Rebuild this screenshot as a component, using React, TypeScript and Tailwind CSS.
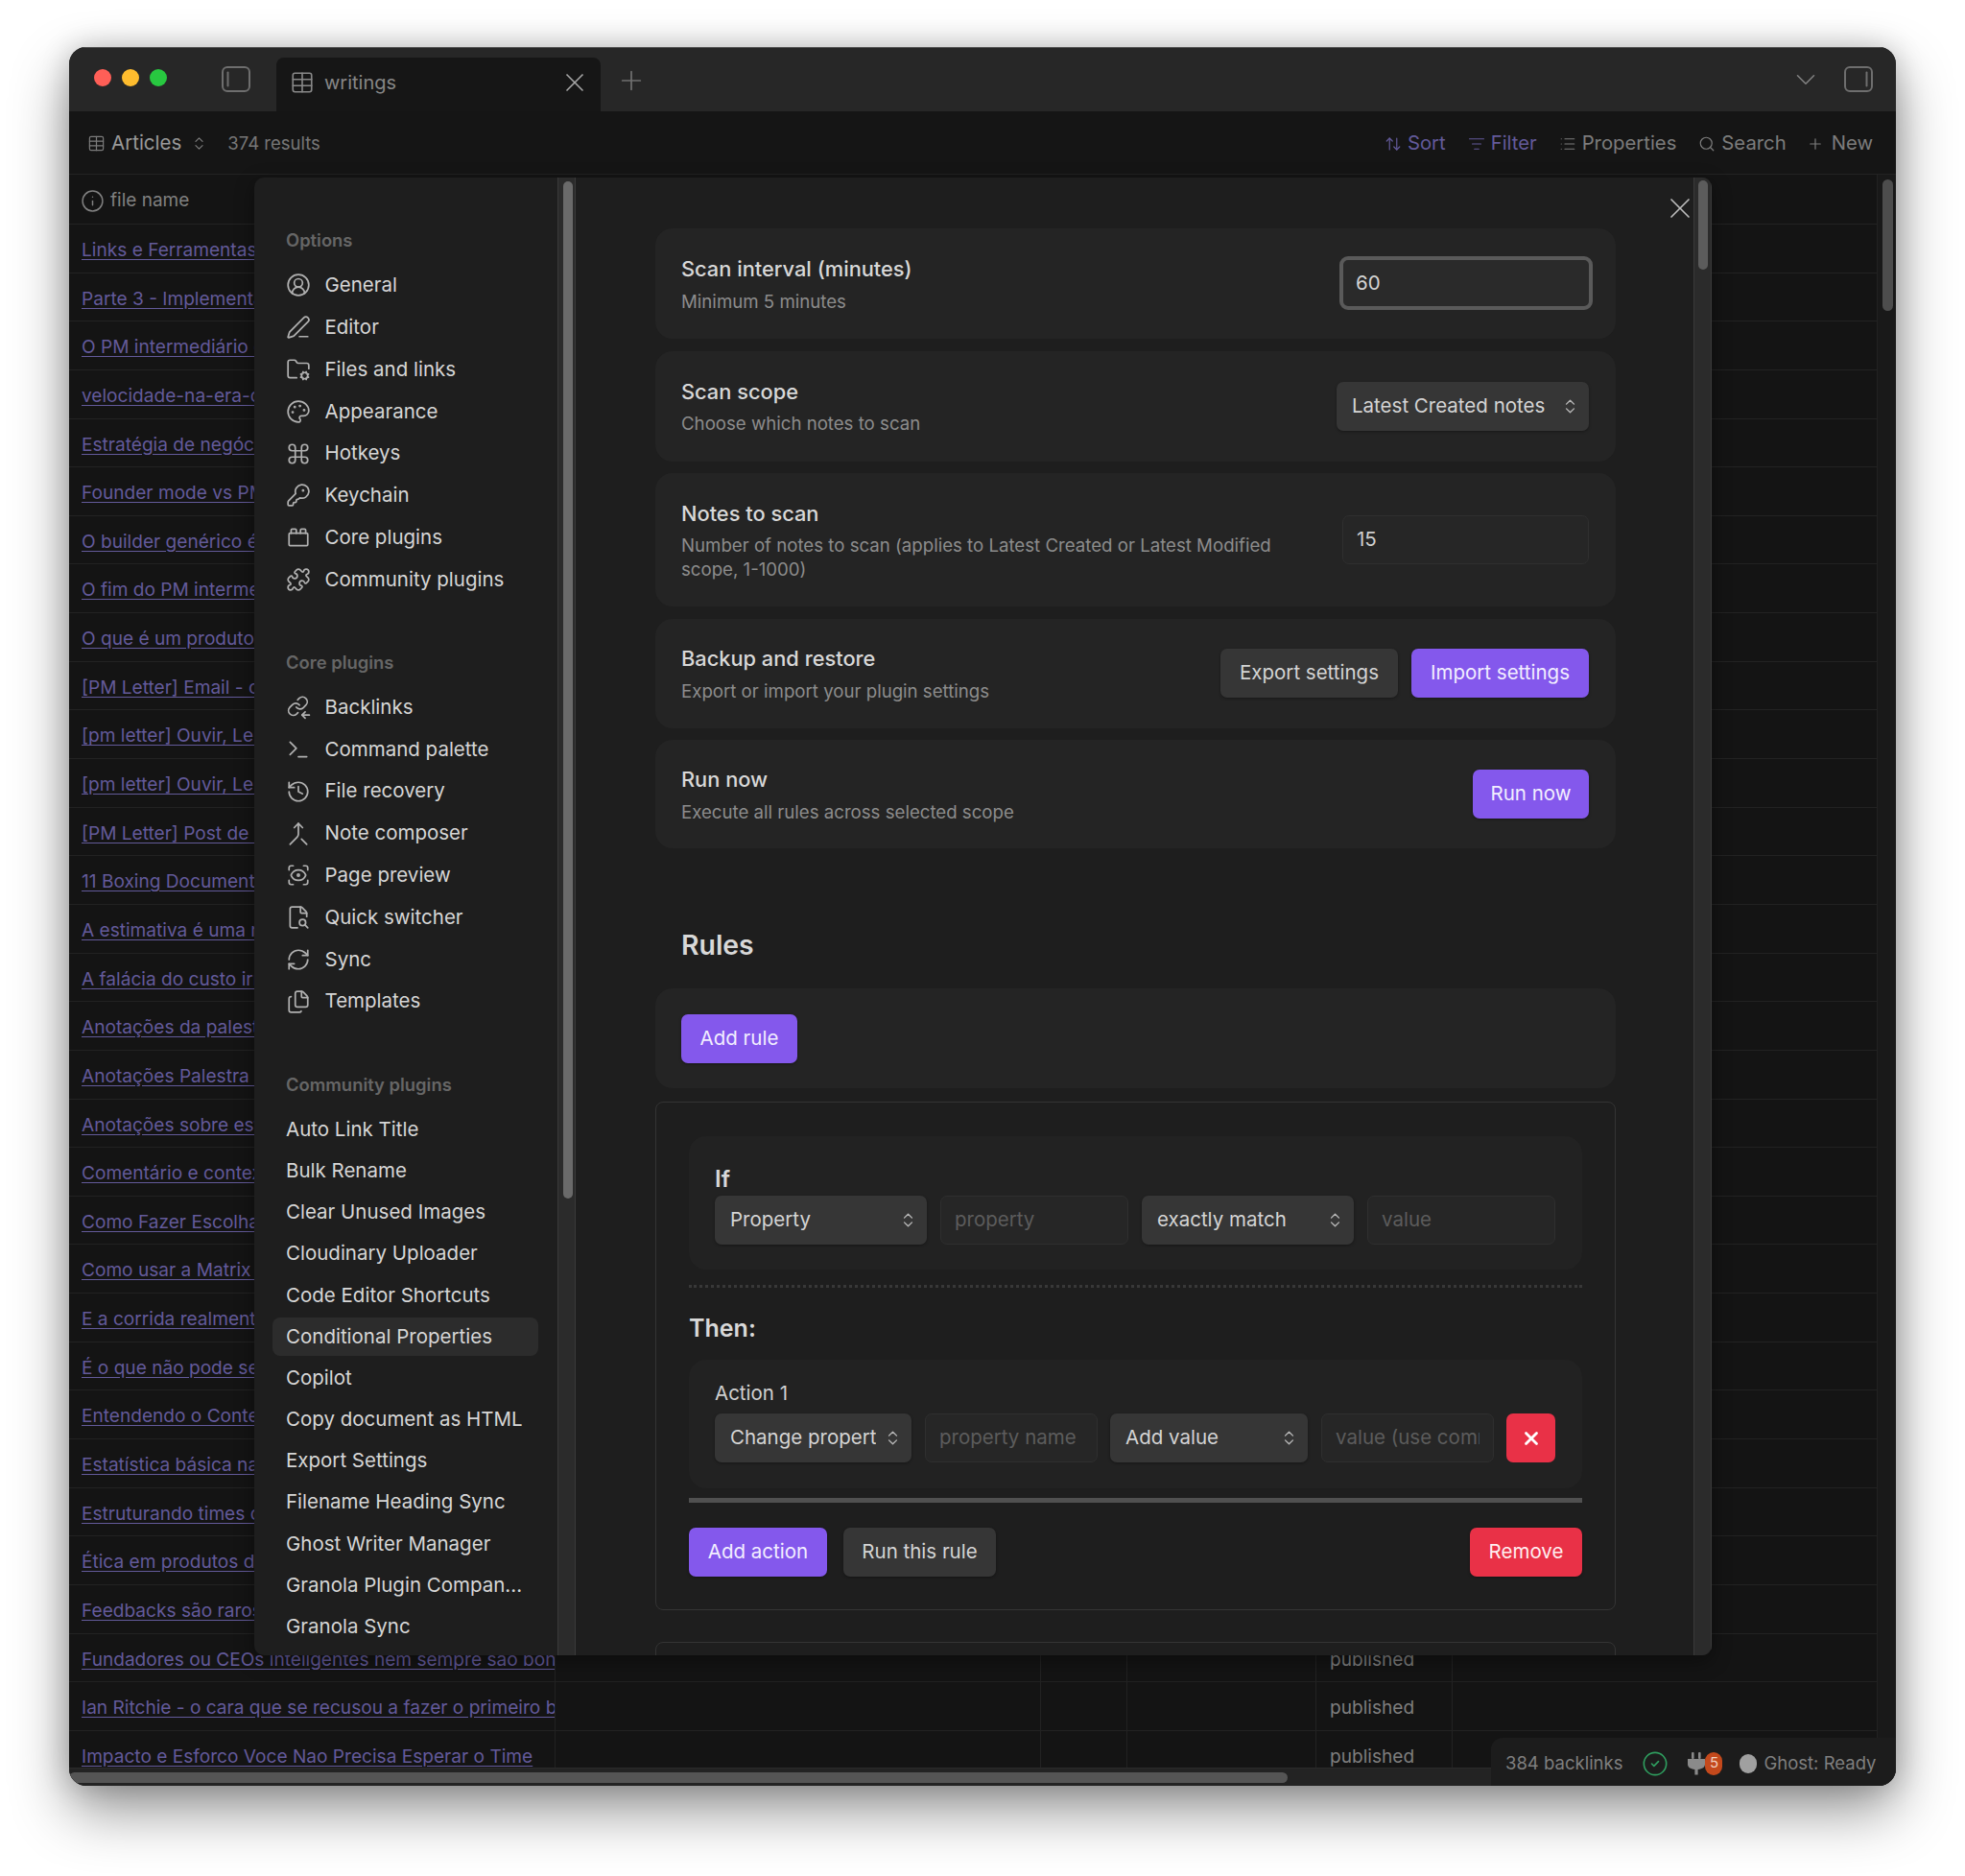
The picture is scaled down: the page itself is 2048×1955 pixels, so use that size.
import {
  ArrowUpDown,
  ChevronDown,
  ChevronsUpDown,
  CircleCheck,
  CircleUserRound,
  Command,
  Files,
  FileSearch2,
  FolderCog,
  History,
  Info,
  KeyRound,
  List,
  ListFilter,
  Merge,
  Palette,
  PenLine,
  Plus,
  Puzzle,
  RefreshCw,
  ScanEye,
  Search,
  Table,
  Terminal,
  ToyBrick,
  X,
} from "lucide-react"
import type { ReactNode } from "react"

const files = [
  "Links e Ferramentas para produto",
  "Parte 3 - Implementando o processo",
  "O PM intermediário e o mercado",
  "velocidade-na-era-da-ia-e-produto",
  "Estratégia de negócio e produto",
  "Founder mode vs PM mode na prática",
  "O builder genérico é o novo PM",
  "O fim do PM intermediário e depois",
  "O que é um produto de verdade",
  "[PM Letter] Email - como começar",
  "[pm letter] Ouvir, Ler e Escrever",
  "[pm letter] Ouvir, Ler e Escrever 2",
  "[PM Letter] Post de lançamento",
  "11 Boxing Documents para produto",
  "A estimativa é uma mentira útil",
  "A falácia do custo irrecuperável",
  "Anotações da palestra de produto",
  "Anotações Palestra de estratégia",
  "Anotações sobre estratégia e times",
  "Comentário e contexto em produto",
  "Como Fazer Escolhas difíceis",
  "Como usar a Matrix de decisão",
  "E a corrida realmente importa aqui",
  "É o que não pode ser medido",
  "Entendendo o Contexto do produto",
  "Estatística básica na prática diária",
  "Estruturando times de produto",
  "Ética em produtos digitais hoje",
  "Feedbacks são raros e valiosos",
  "Fundadores ou CEOs inteligentes nem sempre sao bons gestores de produto",
  "Ian Ritchie - o cara que se recusou a fazer o primeiro bilhão de dólares",
  "Impacto e Esforco Voce Nao Precisa Esperar o Time",
]

function BacklinksIcon() {
  return (
    <svg width="30" height="30" viewBox="0 0 24 24" fill="none" stroke="currentColor" strokeWidth="1.6" strokeLinecap="round" strokeLinejoin="round">
      <path d="M10 12a4.5 4.5 0 0 0 6.7.5l2.6-2.6a4.6 4.6 0 0 0-6.5-6.5l-1.5 1.5" />
      <path d="M13 10a4.5 4.5 0 0 0-6.7-.5l-2.6 2.6a4.6 4.6 0 0 0 6.5 6.5l1.4-1.4" />
      <path d="M22.5 19.5h-7" />
      <path d="m18.5 16.5-3 3 3 3" />
    </svg>
  )
}

function PaneIcon({ side }: { side: "left" | "right" }) {
  return (
    <svg width="30" height="27" viewBox="0 0 30 27" fill="none" stroke="#6e6e6e" strokeWidth="2" strokeLinecap="round">
      <rect x="1" y="1" width="28" height="25" rx="5" />
      {side === "left" ? <path d="M6.5 6.5v14" /> : <path d="M23.5 6.5v14" />}
    </svg>
  )
}

const optionItems = [
  { label: "General", icon: <CircleUserRound size={30} strokeWidth={1.6} /> },
  { label: "Editor", icon: <PenLine size={30} strokeWidth={1.6} /> },
  { label: "Files and links", icon: <FolderCog size={30} strokeWidth={1.6} /> },
  { label: "Appearance", icon: <Palette size={30} strokeWidth={1.6} /> },
  { label: "Hotkeys", icon: <Command size={30} strokeWidth={1.6} /> },
  { label: "Keychain", icon: <KeyRound size={30} strokeWidth={1.6} /> },
  { label: "Core plugins", icon: <ToyBrick size={30} strokeWidth={1.6} /> },
  { label: "Community plugins", icon: <Puzzle size={30} strokeWidth={1.6} /> },
]

const coreItems = [
  { label: "Backlinks", icon: <BacklinksIcon /> },
  { label: "Command palette", icon: <Terminal size={30} strokeWidth={1.6} /> },
  { label: "File recovery", icon: <History size={30} strokeWidth={1.6} /> },
  { label: "Note composer", icon: <Merge size={30} strokeWidth={1.6} /> },
  { label: "Page preview", icon: <ScanEye size={30} strokeWidth={1.6} /> },
  { label: "Quick switcher", icon: <FileSearch2 size={30} strokeWidth={1.6} /> },
  { label: "Sync", icon: <RefreshCw size={30} strokeWidth={1.6} /> },
  { label: "Templates", icon: <Files size={30} strokeWidth={1.6} /> },
]

const communityItems = [
  "Auto Link Title",
  "Bulk Rename",
  "Clear Unused Images",
  "Cloudinary Uploader",
  "Code Editor Shortcuts",
  "Conditional Properties",
  "Copilot",
  "Copy document as HTML",
  "Export Settings",
  "Filename Heading Sync",
  "Ghost Writer Manager",
  "Granola Plugin Compan...",
  "Granola Sync",
]

function NavItem({ label, icon }: { label: string; icon: ReactNode }) {
  return (
    <div className="flex h-[43.8px] items-center gap-[14.5px] text-[20.5px] text-[#d6d6d6]">
      <span className="flex w-[26px] shrink-0 justify-center text-[#b0b0b0]">{icon}</span>
      <span>{label}</span>
    </div>
  )
}

function Select({ label, className }: { label: string; className: string }) {
  return (
    <div className={`flex h-[51px] shrink-0 items-center rounded-[7px] bg-[#363636] pl-[16px] pr-[10px] text-[20.5px] text-[#d4d4d4] shadow-[0_1px_3px_rgba(0,0,0,0.35)] ${className}`}>
      <span className="min-w-0 flex-1 overflow-hidden whitespace-nowrap">{label}</span>
      <ChevronsUpDown size={19} strokeWidth={1.75} className="ml-[8px] shrink-0 text-[#b8b8b8]" />
    </div>
  )
}

function Field({ text, className, muted = true }: { text: string; className: string; muted?: boolean }) {
  return (
    <div className={`flex h-[51px] shrink-0 items-center overflow-hidden whitespace-nowrap rounded-[7px] border border-[#2f2f2f] bg-[#262626] px-[14px] text-[20.5px] ${muted ? "text-[#5c5c5c]" : "text-[#cfcfcf]"} ${className}`}>
      <span className="block w-full overflow-hidden">{text}</span>
    </div>
  )
}

function Btn({ label, tone, className = "" }: { label: string; tone: "purple" | "gray" | "red"; className?: string }) {
  const tones = {
    purple: "bg-[#8458ec] text-[#f2eeff]",
    gray: "bg-[#363636] text-[#d4d4d4]",
    red: "bg-[#e93147] text-[#ffeef0]",
  }
  return (
    <div className={`flex h-[51px] shrink-0 items-center justify-center rounded-[7px] text-[20.5px] shadow-[0_1px_3px_rgba(0,0,0,0.35)] ${tones[tone]} ${className}`}>
      {label}
    </div>
  )
}

function SettingCard({ title, desc, height, children }: { title: string; desc: string; height: string; children: ReactNode }) {
  return (
    <div className={`flex items-center justify-between rounded-[18px] bg-[#242424] pl-[27px] pr-[28px] ${height}`}>
      <div className="w-[640px]">
        <div className="text-[21.8px] font-medium leading-[30px] text-[#d8d8d8]">{title}</div>
        <div className="mt-[6.5px] text-[18.65px] leading-[24.5px] text-[#8c8c8c]">{desc}</div>
      </div>
      {children}
    </div>
  )
}

export default function App() {
  return (
    <div className="h-[1955px] w-[2048px] overflow-hidden bg-white pl-[72px] pt-[49px] font-['Inter',sans-serif]">
      <div className="relative flex h-[1812px] w-[1904px] flex-col overflow-hidden rounded-[18px] bg-[#141414] shadow-[0_26px_60px_rgba(0,0,0,0.42),0_0_30px_rgba(0,0,0,0.2)]">
        {/* Title bar */}
        <div className="flex h-[67px] shrink-0 items-end border-t border-[#555] bg-[#272727]">
          <div className="mb-[26px] ml-[26px] flex gap-[11px]">
            <span className="h-[18px] w-[18px] rounded-full bg-[#ff5f57]" />
            <span className="h-[18px] w-[18px] rounded-full bg-[#febc2e]" />
            <span className="h-[18px] w-[18px] rounded-full bg-[#28c840]" />
          </div>
          <div className="mb-[20px] ml-[57px]">
            <PaneIcon side="left" />
          </div>
          <div className="ml-[27px] flex h-[56px] w-[338px] items-center rounded-t-[8px] bg-[#161616] pb-[4px] pl-[14px] pr-[11px] text-[20px] text-[#868686]">
            <Table size={26} strokeWidth={1.5} className="text-[#888]" />
            <span className="ml-[10px] flex-1">writings</span>
            <X size={32} strokeWidth={1.25} className="text-[#a8a8a8]" />
          </div>
          <Plus size={32} strokeWidth={1.3} className="mb-[16px] ml-[16px] text-[#707070]" />
          <div className="flex-1" />
          <ChevronDown size={34} strokeWidth={1.1} className="mb-[16px] text-[#808080]" />
          <div className="mb-[20px] ml-[23px] mr-[24px]">
            <PaneIcon side="right" />
          </div>
        </div>

        {/* View toolbar */}
        <div className="flex h-[66px] shrink-0 items-center border-b border-[#232323] bg-[#151515] pl-[19px] pr-[24px] pt-[2px] text-[20.3px] text-[#7c7c7c]">
          <Table size={19} strokeWidth={1.5} />
          <span className="ml-[6px] text-[20.5px] text-[#9a9a9a]">Articles</span>
          <ChevronsUpDown size={17} strokeWidth={1.6} className="ml-[10px]" />
          <span className="ml-[21px] text-[18.5px] text-[#777]">374 results</span>
          <div className="flex-1" />
          <div className="flex items-center gap-[6px] text-[#635a9a]">
            <ArrowUpDown size={18} strokeWidth={1.6} />
            <span>Sort</span>
          </div>
          <div className="ml-[23px] flex items-center gap-[6px] text-[#635a9a]">
            <ListFilter size={18} strokeWidth={1.6} />
            <span>Filter</span>
          </div>
          <div className="ml-[23px] flex items-center gap-[6px]">
            <List size={18} strokeWidth={1.6} />
            <span>Properties</span>
          </div>
          <div className="ml-[23px] flex items-center gap-[6px]">
            <Search size={18} strokeWidth={1.6} />
            <span>Search</span>
          </div>
          <div className="ml-[21px] flex items-center gap-[8px]">
            <Plus size={18} strokeWidth={1.6} />
            <span>New</span>
          </div>
        </div>

        {/* Table */}
        <div className="flex min-h-0 flex-1">
          <div className="min-w-0 flex-1 overflow-hidden border-r border-[#222]">
            <div className="flex h-[52px] items-center gap-[6px] border-b border-[#222] pl-[12px] pt-[3px] text-[19px] text-[#808080]">
              <Info size={25} strokeWidth={1.4} />
              <span>file name</span>
            </div>
            {files.map((name, i) => (
              <div key={name} className="flex h-[50.65px] items-stretch border-b border-[#222] text-[19.1px]">
                <div className="flex w-[506px] shrink-0 items-center overflow-hidden whitespace-nowrap pl-[13px] pt-[3px] text-[#635a9a] underline underline-offset-[3px]">
                  <span className={i < 29 ? "block w-[180px] overflow-hidden" : "block"}>{name}</span>
                </div>
                <div className="w-[506px] shrink-0 border-l border-[#222]" />
                <div className="w-[90px] shrink-0 border-l border-[#222]" />
                <div className="w-[197px] shrink-0 border-l border-[#222]" />
                <div className="flex w-[143px] shrink-0 items-center border-x border-[#222] pl-[14px] pt-[3px] text-[#7e7e7e]">
                  {i >= 29 ? "published" : ""}
                </div>
              </div>
            ))}
          </div>
          <div className="w-[19px] shrink-0 bg-[#191919] pl-[5px] pt-[5px]">
            <div className="h-[137px] w-[11px] rounded-full bg-[#4d4d4d]" />
          </div>
        </div>
        <div className="h-[19px] shrink-0 border-t border-[#2a2a2a] bg-[#232323] pt-[4px]">
          <div className="h-[11px] w-[1270px] rounded-full bg-[#555]" />
        </div>

        {/* Status bar */}
        <div className="absolute bottom-0 right-0 flex h-[50px] w-[422px] items-center rounded-tl-[12px] bg-[#1c1c1c] pl-[15px] pt-[3px] text-[18.5px] text-[#7f7f7f]">
          <span>384 backlinks</span>
          <CircleCheck size={28} strokeWidth={1.4} className="ml-[20px] text-[#2f9e5f]" />
          <svg width="20" height="24" viewBox="0 0 20 24" fill="#8a8a8a" className="ml-[19px]">
            <rect x="5" y="0" width="2.6" height="7" rx="1" />
            <rect x="12" y="0" width="2.6" height="7" rx="1" />
            <path d="M1 7h18v5.5c0 3-2.6 5-7.4 5.5v5.5h-3.2V18C3.6 17.5 1 15.5 1 12.5Z" />
          </svg>
          <span className="ml-[-1px] flex h-[24px] w-[18px] items-center justify-center rounded-full bg-[#c4491c] text-[15px] text-[#f0d0c0]">5</span>
          <span className="ml-[18px] h-[20px] w-[18px] rounded-full bg-[#a0a0a0]" />
          <span className="ml-[7px]">Ghost: Ready</span>
        </div>

        {/* Settings modal */}
        <div className="absolute left-[193px] top-[136px] flex h-[1540px] w-[1519px] overflow-hidden rounded-[10px] bg-[#1e1e1e] shadow-[0_6px_20px_rgba(0,0,0,0.4)]">
          {/* Settings sidebar */}
          <div className="w-[316px] shrink-0 overflow-hidden pl-[33px] pt-[51px]">
            <div className="flex h-[30px] items-center text-[18.4px] font-semibold text-[#666]">Options</div>
            <div className="mt-[9.6px]">
              {optionItems.map((item) => (
                <NavItem key={item.label} label={item.label} icon={item.icon} />
              ))}
            </div>
            <div className="mt-[50px] flex h-[30px] items-center text-[18.4px] font-semibold text-[#666]">Core plugins</div>
            <div className="mt-[9.3px]">
              {coreItems.map((item) => (
                <NavItem key={item.label} label={item.label} icon={item.icon} />
              ))}
            </div>
            <div className="mt-[50.2px] flex h-[30px] items-center text-[18.4px] font-semibold text-[#666]">Community plugins</div>
            <div className="mt-[11.3px]">
              {communityItems.map((label) => (
                <div
                  key={label}
                  className={`-ml-[14px] mb-[3.2px] flex h-[40px] w-[277px] items-center rounded-[8px] pl-[14px] text-[20.5px] text-[#d6d6d6] ${label === "Conditional Properties" ? "bg-[#2c2c2c]" : ""}`}
                >
                  {label}
                </div>
              ))}
            </div>
          </div>
          <div className="w-[19px] shrink-0 border-x border-[#3a3a3a] bg-[#2b2b2b] pl-[5px] pt-[4px]">
            <div className="h-[1060px] w-[10px] rounded-full bg-[#6a6a6a]" />
          </div>

          {/* Settings content */}
          <div className="relative min-w-0 flex-1 overflow-hidden pl-[83px] pt-[53px]">
            <X size={36} strokeWidth={1.1} className="absolute right-[-4px] top-[14px] text-[#bdbdbd]" />
            <div className="flex w-[1001px] flex-col gap-[12.5px]">
              <SettingCard title="Scan interval (minutes)" desc="Minimum 5 minutes" height="h-[115px]">
                <div className="mb-[1px] ml-[4px] mr-[-4px] flex h-[56px] w-[264px] items-center rounded-[9px] border-[4px] border-[#5a5a5a] bg-[#2a2a2a] pl-[13px] text-[20.5px] text-[#d4d4d4]">
                  60
                </div>
              </SettingCard>
              <SettingCard title="Scan scope" desc="Choose which notes to scan" height="h-[115px]">
                <Select label="Latest Created notes" className="w-[263px]" />
              </SettingCard>
              <SettingCard title="Notes to scan" desc="Number of notes to scan (applies to Latest Created or Latest Modified scope, 1-1000)" height="h-[139px]">
                <Field text="15" className="w-[257px]" muted={false} />
              </SettingCard>
              <SettingCard title="Backup and restore" desc="Export or import your plugin settings" height="h-[114px]">
                <div className="flex gap-[14px]">
                  <Btn label="Export settings" tone="gray" className="w-[185px]" />
                  <Btn label="Import settings" tone="purple" className="w-[185px]" />
                </div>
              </SettingCard>
              <SettingCard title="Run now" desc="Execute all rules across selected scope" height="h-[113px]">
                <Btn label="Run now" tone="purple" className="w-[121px]" />
              </SettingCard>
            </div>

            <div className="ml-[27px] mt-[72px] flex h-[58px] items-center text-[28.4px] font-semibold text-[#d8d8d8]">Rules</div>
            <div className="mt-[16px] flex h-[104px] w-[1001px] items-center rounded-[18px] bg-[#242424] pl-[27px]">
              <Btn label="Add rule" tone="purple" className="w-[121px]" />
            </div>

            {/* Rule box */}
            <div className="mt-[14px] w-[1001px] rounded-[8px] border border-[#343434] px-[34px] pb-[34px] pt-[35px]">
              <div className="rounded-[18px] bg-[#222] px-[27px] pb-[26px] pt-[27px]">
                <div className="flex h-[35px] items-center text-[24px] font-semibold text-[#d8d8d8]">If</div>
                <div className="flex gap-[14px]">
                  <Select label="Property" className="w-[221px]" />
                  <Field text="property" className="w-[196px]" />
                  <Select label="exactly match" className="w-[221px]" />
                  <Field text="value" className="w-[196px]" />
                </div>
              </div>
              <div className="mt-[16px] border-t-[3px] border-dotted border-[#383838]" />
              <div className="mt-[25px] flex h-[36px] items-center text-[25px] font-semibold text-[#d8d8d8]">Then:</div>
              <div className="mt-[14px] rounded-[18px] bg-[#222] px-[27px] pb-[27px] pt-[18px]">
                <div className="flex h-[34px] items-center text-[20.5px] text-[#d0d0d0]">Action 1</div>
                <div className="mt-[4px] flex items-center">
                  <Select label="Change property" className="w-[205px]" />
                  <Field text="property name" className="ml-[14px] w-[180px]" />
                  <Select label="Add value" className="ml-[13px] w-[206px]" />
                  <Field text="value (use commas for multiple)" className="ml-[14px] w-[180px]" />
                  <div className="ml-[13px] flex h-[51px] w-[51px] items-center justify-center rounded-[7px] bg-[#e93147] text-white">
                    <X size={22} strokeWidth={3} />
                  </div>
                </div>
              </div>
              <div className="mt-[10px] h-[5px] bg-[#505050]" />
              <div className="mt-[26px] flex">
                <Btn label="Add action" tone="purple" className="w-[144px]" />
                <Btn label="Run this rule" tone="gray" className="ml-[17px] w-[159px]" />
                <div className="flex-1" />
                <Btn label="Remove" tone="red" className="w-[117px]" />
              </div>
            </div>
            <div className="mt-[33px] h-[60px] w-[1001px] rounded-[8px] border border-[#343434]" />
          </div>
          <div className="w-[19px] shrink-0 border-x border-[#3a3a3a] bg-[#2b2b2b] pl-[4px] pt-[3px]">
            <div className="h-[93px] w-[10px] rounded-full bg-[#5c5c5c]" />
          </div>
        </div>
      </div>
    </div>
  )
}
